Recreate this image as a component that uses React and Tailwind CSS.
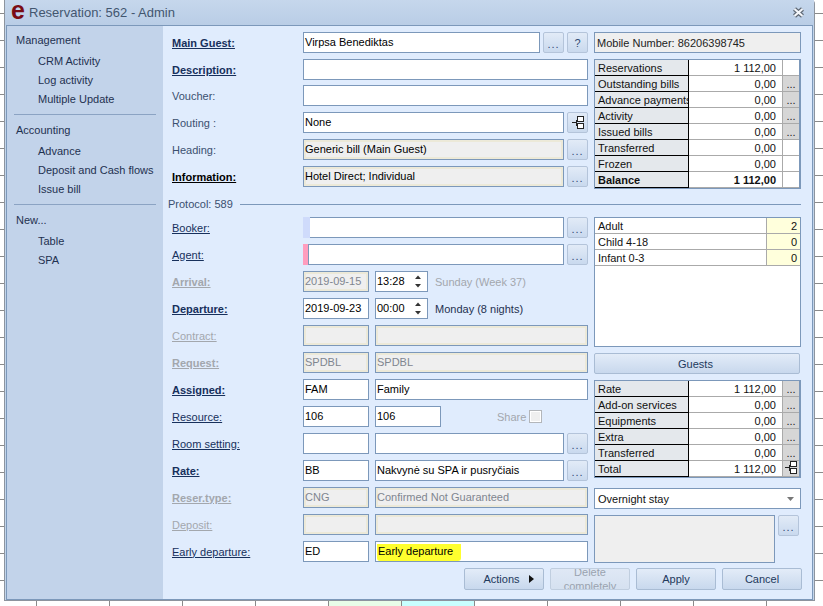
import React from "react";

const sideMenu = [
  { title: "Management", items: ["CRM Activity", "Log activity", "Multiple Update"] },
  { title: "Accounting", items: ["Advance", "Deposit and Cash flows", "Issue bill"] },
  { title: "New...", items: ["Table", "SPA"] },
];

const balanceRows = [
  { label: "Reservations", value: "1 112,00" },
  { label: "Outstanding bills", value: "0,00", more: true },
  { label: "Advance payments", value: "0,00", more: true },
  { label: "Activity", value: "0,00", more: true },
  { label: "Issued bills", value: "0,00", more: true },
  { label: "Transferred", value: "0,00" },
  { label: "Frozen", value: "0,00" },
  { label: "Balance", value: "1 112,00", bold: true },
];

const rateRows = [
  { label: "Rate", value: "1 112,00", more: true },
  { label: "Add-on services", value: "0,00", more: true },
  { label: "Equipments", value: "0,00", more: true },
  { label: "Extra", value: "0,00", more: true },
  { label: "Transferred", value: "0,00", more: true },
  { label: "Total", value: "1 112,00", tree: true },
];

const guestRows = [
  { label: "Adult", value: "2" },
  { label: "Child 4-18", value: "0" },
  { label: "Infant 0-3", value: "0" },
];

const TreeIcon = () => (
  <svg width="12" height="13" viewBox="0 0 12 13" fill="none" stroke="#222" strokeWidth="1" shapeRendering="crispEdges">
    <rect x="5.5" y="0.5" width="6" height="5" fill="#fff" />
    <rect x="5.5" y="7.5" width="6" height="5" fill="#fff" />
    <path d="M0 6.5H4.5M4.5 3.5V9.5M4.5 3.5H5.5M4.5 9.5H5.5" />
  </svg>
);

const Spinner = () => (
  <svg width="8" height="15" viewBox="0 0 8 15" fill="#333" className="shrink-0">
    <path d="M4 1.5L7 5H1Z" />
    <path d="M1 10H7L4 13.5Z" />
  </svg>
);

const SmallButton = ({ children, className = "" }) => (
  <div className={`w-[21px] h-[21px] shrink-0 flex items-center justify-center rounded-[2px] border border-[#b4c4da] bg-linear-to-b from-[#e2ebf7] to-[#c9d9ee] text-[#2f4a73] ${className}`}>
    {children || <span className="tracking-[1px] pt-[2px]">...</span>}
  </div>
);

const Field = ({ width, text, disabled, dark, children }) => (
  <div
    className={`h-[21px] shrink-0 flex items-center overflow-hidden border border-[#7c98ba] ${
      disabled ? "bg-[#efefef] shadow-[inset_0_0_0_2px_#ece9d8]" : "bg-white"
    } ${disabled && !dark ? "text-[#7f8690]" : "text-black"} ${width}`}
  >
    <span className="pl-px pb-[2px] whitespace-nowrap">{text}</span>
    {children}
  </div>
);

const labelStyles = {
  strong: "font-bold underline text-[#17305c]",
  black: "font-bold underline text-black",
  link: "underline text-[#17305c]",
  plain: "text-[#3b5070]",
  muted: "underline text-[#a3a7ad]",
  mutedBold: "font-bold underline text-[#a3a7ad]",
};

const Row = ({ label, kind, className = "", children }) => (
  <div className={`h-[21px] flex items-center ${className}`}>
    <div className={`w-[131px] shrink-0 ${labelStyles[kind]}`}>{label}</div>
    <div className="flex items-center">{children}</div>
  </div>
);

const AmountTable = ({ rows, className = "" }) => (
  <div className={`w-[207px] border border-[#7c98ba] border-r-2 ${className}`}>
    {rows.map((row) => (
      <div key={row.label} className={`h-[16px] flex ${row.bold ? "font-bold" : ""}`}>
        <div className="w-[94px] shrink-0 pl-[3px] bg-[#e4e8ec] border-b border-r border-black overflow-hidden whitespace-nowrap text-[#111] leading-[16px]">
          {row.label}
        </div>
        <div className="w-[93px] shrink-0 pr-[6px] bg-white text-right border-b border-[#aaaaaa] text-[#111] leading-[16px]">
          {row.value}
        </div>
        <div className={`flex-1 flex justify-center border-b border-l border-[#aaaaaa] ${row.more || row.tree ? "bg-[#d6d6d6]" : "bg-white"}`}>
          {row.more && <span className="font-normal leading-[16px] text-[#222]">...</span>}
          {row.tree && <TreeIcon />}
        </div>
      </div>
    ))}
  </div>
);

const ActionButton = ({ children, disabled, className = "" }) => (
  <div className={`h-[22px] flex items-center justify-center rounded-[2px] border border-[#a9bcd4] bg-linear-to-b ${
    disabled ? "from-[#dfe8f5] to-[#d5e1f0] text-[#9aa3af] border-[#c0cedf]" : "from-[#e3ecf8] to-[#c8d8ed] text-[#22395c]"
  } ${className}`}>
    {children}
  </div>
);

export default function App() {
  return (
    <div
      className="w-[823px] h-[606px] overflow-hidden bg-white bg-[linear-gradient(#8a8a8a_1px,transparent_1px),linear-gradient(90deg,#8a8a8a_1px,transparent_1px)] bg-size-[73px_27px] bg-position-[36px_13px] text-[11px] leading-[14px]"
      style={{ fontFamily: '"Liberation Sans", Arial, sans-serif' }}
    >
      <div className="ml-[4px] w-[811px] h-[601px] flex flex-col border border-[#8d949e] border-t-0 rounded-tr-[4px] bg-[#c3d5ea]">
        {/* Title bar */}
        <div className="h-[25px] shrink-0 flex items-center pl-[6px] pr-[9px] bg-linear-to-b from-[#c6d7ec] to-[#b9cde6]">
          <span className="w-[18px] text-[25px] leading-[18px] font-bold text-[#7a0c14] -mt-[5px]">e</span>
          <span className="text-[13px] text-[#43566f]">Reservation: 562 - Admin</span>
          <svg className="ml-auto" width="13" height="11" viewBox="0 0 13 11">
            <path d="M2.5 2L10.5 9M10.5 2L2.5 9" fill="none" stroke="#5f6975" strokeWidth="4.5" />
            <path d="M2.5 2L10.5 9M10.5 2L2.5 9" fill="none" stroke="#f4f6fa" strokeWidth="2.2" />
          </svg>
        </div>

        {/* Body */}
        <div className="mx-[1px] flex-1 flex border border-[#7c98ba] min-h-0">
          {/* Side menu */}
          <div className="w-[156px] shrink-0 bg-[#c2d3ea] pt-[6px] text-[#1f3150]">
            {sideMenu.map((group, i) => (
              <div key={group.title}>
                {i > 0 && <div className="mt-[5px] mb-[7px] ml-[7px] mr-[7px] h-px bg-[#8ba3c3]" />}
                <div className="pl-[9px] h-[16px] leading-[16px]">{group.title}</div>
                <div className="mt-[4px] pl-[31px]">
                  {group.items.map((item) => (
                    <div key={item} className="h-[19px] leading-[19px] whitespace-nowrap">{item}</div>
                  ))}
                </div>
              </div>
            ))}
          </div>

          {/* Main panel */}
          <div className="flex-1 bg-[#e0ecfd] pl-[9px] pt-[6px]">
            <div className="flex gap-[6px]">
              <div className="w-[416px] flex flex-col gap-[6px]">
                <Row label="Main Guest:" kind="strong">
                  <Field width="w-[237px]" text="Virpsa Benediktas" />
                  <SmallButton className="ml-[3px]" />
                  <SmallButton className="ml-[3px]">?</SmallButton>
                </Row>
                <Row label="Description:" kind="strong"><Field width="w-[285px]" /></Row>
                <Row label="Voucher:" kind="plain" className="-mt-px"><Field width="w-[285px]" /></Row>
                <Row label="Routing :" kind="plain">
                  <Field width="w-[261px]" text="None" />
                  <SmallButton className="ml-[3px]"><TreeIcon /></SmallButton>
                </Row>
                <Row label="Heading:" kind="plain">
                  <Field width="w-[261px]" text="Generic bill (Main Guest)" disabled dark />
                  <SmallButton className="ml-[3px]" />
                </Row>
                <Row label="Information:" kind="black">
                  <Field width="w-[261px]" text="Hotel Direct; Individual" disabled dark />
                  <SmallButton className="ml-[3px]" />
                </Row>
              </div>
              <div className="w-[207px] flex flex-col gap-[6px]">
                <div className="h-[21px] flex items-center pl-[2px] border border-[#7c98ba] bg-[#efefef] text-[#222] whitespace-nowrap">
                  Mobile Number: 86206398745
                </div>
                <AmountTable rows={balanceRows} />
              </div>
            </div>

            {/* Protocol divider */}
            <div className="mt-[7px] -ml-[4px] w-[633px] h-[16px] flex items-center gap-[7px] text-[#3b5070]">
              <span className="whitespace-nowrap">Protocol: 589</span>
              <div className="flex-1 h-px bg-[#7c98ba]" />
            </div>

            <div className="mt-[5px] flex gap-[6px]">
              <div className="w-[416px] flex flex-col gap-[6px]">
                <Row label="Booker:" kind="link">
                  <div className="w-[7px] h-[21px] bg-[#cfdbfb]" />
                  <Field width="w-[254px] border-l-0" />
                  <SmallButton className="ml-[3px]" />
                </Row>
                <Row label="Agent:" kind="link">
                  <div className="w-[5px] h-[21px] bg-[#ff9dbe]" />
                  <Field width="w-[256px]" />
                  <SmallButton className="ml-[3px]" />
                </Row>
                <Row label="Arrival:" kind="mutedBold">
                  <Field width="w-[66px]" text="2019-09-15" disabled />
                  <Field width="w-[53px] ml-[6px] justify-between pr-[5px]" text="13:28"><Spinner /></Field>
                  <span className="ml-[7px] text-[#a3a7ad] whitespace-nowrap">Sunday (Week 37)</span>
                </Row>
                <Row label="Departure:" kind="strong">
                  <Field width="w-[66px]" text="2019-09-23" />
                  <Field width="w-[53px] ml-[6px] justify-between pr-[5px]" text="00:00"><Spinner /></Field>
                  <span className="ml-[7px] text-[#1f3150] whitespace-nowrap">Monday (8 nights)</span>
                </Row>
                <Row label="Contract:" kind="muted">
                  <Field width="w-[66px]" disabled />
                  <Field width="w-[213px] ml-[6px]" disabled />
                </Row>
                <Row label="Request:" kind="mutedBold">
                  <Field width="w-[66px]" text="SPDBL" disabled />
                  <Field width="w-[213px] ml-[6px]" text="SPDBL" disabled />
                </Row>
                <Row label="Assigned:" kind="strong">
                  <Field width="w-[66px]" text="FAM" />
                  <Field width="w-[213px] ml-[6px]" text="Family" />
                </Row>
                <Row label="Resource:" kind="link">
                  <Field width="w-[66px]" text="106" />
                  <Field width="w-[66px] ml-[6px]" text="106" />
                  <span className="ml-[56px] text-[#a3a7ad]">Share</span>
                  <div className="ml-[3px] w-[13px] h-[13px] border border-[#b3b6ba] bg-[#efefef] shadow-[inset_0_0_0_1px_#fff]" />
                </Row>
                <Row label="Room setting:" kind="link">
                  <Field width="w-[66px]" />
                  <Field width="w-[189px] ml-[6px]" />
                  <SmallButton className="ml-[3px]" />
                </Row>
                <Row label="Rate:" kind="strong">
                  <Field width="w-[66px]" text="BB" />
                  <Field width="w-[189px] ml-[6px]" text="Nakvynė su SPA ir pusryčiais" />
                  <SmallButton className="ml-[3px]" />
                </Row>
                <Row label="Reser.type:" kind="mutedBold">
                  <Field width="w-[66px]" text="CNG" disabled />
                  <Field width="w-[213px] ml-[6px]" text="Confirmed Not Guaranteed" disabled />
                </Row>
                <Row label="Deposit:" kind="muted">
                  <Field width="w-[66px]" disabled />
                  <Field width="w-[213px] ml-[6px]" disabled />
                </Row>
                <Row label="Early departure:" kind="link">
                  <Field width="w-[66px]" text="ED" />
                  <div className="w-[213px] ml-[6px] h-[21px] shrink-0 flex items-start pt-[2px] pl-[1px] border border-[#7c98ba] bg-white text-black overflow-hidden">
                    <span className="pl-px pr-[8px] pb-[3px] bg-[#ffff2e] rounded-b-[3px] whitespace-nowrap">Early departure</span>
                  </div>
                </Row>
              </div>

              <div className="w-[207px] flex flex-col">
                <div className="h-[130px] border border-[#7c98ba] bg-white">
                  {guestRows.map((row) => (
                    <div key={row.label} className="h-[16px] flex border-b border-[#aaaaaa] text-[#111]">
                      <div className="flex-1 pl-[3px] leading-[16px] border-r border-[#aaaaaa]">{row.label}</div>
                      <div className="w-[33px] pr-[3px] text-right leading-[16px] bg-[#ffffdc]">{row.value}</div>
                    </div>
                  ))}
                </div>
                <ActionButton className="mt-[6px] !h-[21px] w-[206px] pr-[3px]">Guests</ActionButton>
                <AmountTable rows={rateRows} className="mt-[6px]" />
                <div className="mt-[10px] h-[21px] flex items-center justify-between pl-[3px] pr-[6px] border border-[#7c98ba] bg-white text-[#111]">
                  <span>Overnight stay</span>
                  <svg width="7" height="4" viewBox="0 0 7 4" fill="#777"><path d="M0 0H7L3.5 4Z" /></svg>
                </div>
                <div className="mt-[6px] flex items-start gap-[3px]">
                  <div className="w-[181px] h-[48px] border border-[#7c98ba] bg-[#efefef]" />
                  <SmallButton />
                </div>
              </div>
            </div>

            {/* Bottom buttons */}
            <div className="mt-[5px] w-[630px] flex justify-end gap-[6px]">
              <ActionButton className="w-[80px] gap-[9px] pl-[9px]">
                Actions
                <svg width="5" height="8" viewBox="0 0 5 8" fill="#111"><path d="M0 0L5 4L0 8Z" /></svg>
              </ActionButton>
              <ActionButton disabled className="w-[80px] overflow-hidden text-center leading-[14px]">
                Delete completely
              </ActionButton>
              <ActionButton className="w-[80px]">Apply</ActionButton>
              <ActionButton className="w-[80px]">Cancel</ActionButton>
            </div>
          </div>
        </div>
      </div>

      {/* Row of the grid behind the dialog */}
      <div className="flex gap-px pl-[329px] h-[5px]">
        <div className="w-[72px] bg-[#e8fde8]" />
        <div className="w-[72px] bg-[#c8ffff]" />
      </div>
    </div>
  );
}
